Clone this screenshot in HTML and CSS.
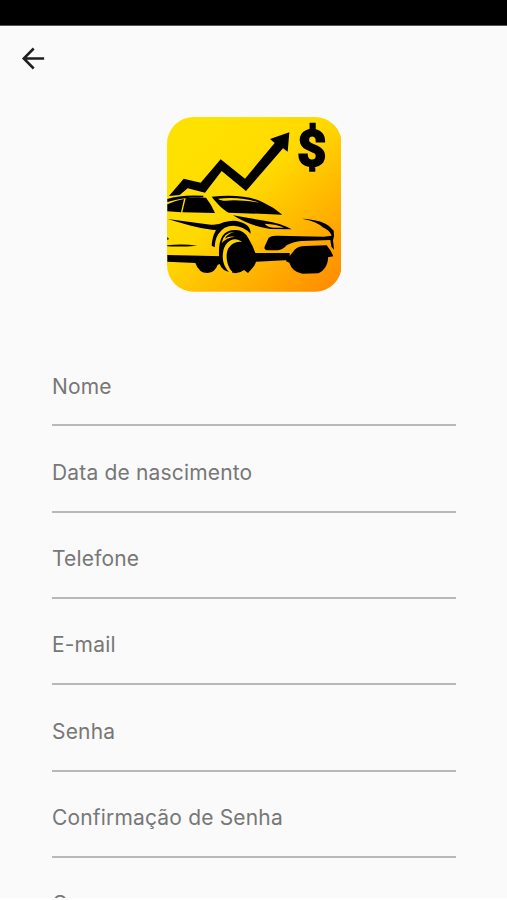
FILE: index.html
```
<!DOCTYPE html>
<html lang="pt-BR">

<head>
    <meta charset="UTF-8">
    <meta name="viewport" content="width=device-width, initial-scale=1.0">
    <title>Cadastro</title>
    <link rel="stylesheet" href="styles.css">
</head>

<body>
    <div class="status-bar"></div>
    <main class="screen">
        <header class="app-bar">
            <button class="back-btn" aria-label="Voltar">
                <svg class="back-icon" viewBox="0 0 24 24">
                    <path d="M22.2 12H2.6M12.2 2.4L2.6 12l9.6 9.6" />
                </svg>
            </button>
        </header>

        <svg class="logo" viewBox="20 22 524 524">
            <defs>
                <linearGradient id="sun" x1="0.18" y1="0.12" x2="0.95" y2="1">
                    <stop offset="0" stop-color="#ffe100" />
                    <stop offset="0.35" stop-color="#ffd900" />
                    <stop offset="0.7" stop-color="#ffb000" />
                    <stop offset="1" stop-color="#ff8a00" />
                </linearGradient>
            </defs>
            <rect x="20" y="22" width="524" height="524" rx="80" fill="url(#sun)" />

            <!-- arrow and dollar sign -->
            <path d="M26 259L70 207L121 219L181 149L254 207L343 100L329 88L387 68L382 126L368 116L257 244L184 184L134 249L82 236L58 256Z" />
            <text class="dollar" x="411" y="168">$</text>

            <!-- roof and windows -->
            <path d="M21 268Q60 254 130 258L128 263Q70 262 21 277Z" />
            <path d="M21 284Q42 273 71 268L62 308L21 305Z" />
            <path d="M76 266Q105 261 137 264Q153 284 164 310L66 308Z" />
            <path d="M154 261C220 255 272 260 306 277Q339 292 366 315L205 309C187 299 169 281 154 261ZM173 267Q180 273 197 273Q235 269 296 279Q245 260 173 267Z" fill-rule="evenodd" />

            <!-- body lines -->
            <path d="M22 328L151 345Q175 347 190 338Q230 325 260 347Q271 357 271 372Q250 350 219 348Q190 348 174 373Q164 388 163 413L154 408Q155 382 167 361Q122 359 22 328Z" />
            <path d="M21 407Q65 402 111 408Q65 412 21 410Z" />
            <path d="M21 382L26 388L21 391Z" />
            <path d="M218 317L313 333Q361 340 394 359L329 358Q266 348 218 317ZM313 342Q321 352 339 354L371 354Q351 344 313 342Z" fill-rule="evenodd" />
            <path d="M425 327Q486 330 509 352L520 363Q523 378 518 392L521 420L513 411L510 391L424 394Q397 396 379 407Q368 420 352 422L318 422Q309 417 314 408L325 384Q333 377 351 378L491 381L514 378Q508 362 487 353Q470 335 425 327Z" />

            <!-- sills and wheels -->
            <path d="M21 436L188 440L190 459L172 465Q164 488 142 490Q116 491 105 460L21 456Z" />
            <path d="M178 463C171 398 180 361 225 361Q251 360 265 387Q279 410 285 430L388 430L388 451L287 456Q282 472 273 479L263 490L251 481Q234 495 211 488Q185 484 178 463Z" />
            <path class="highlight" d="M245 397C220 377 192 397 188 429C184 459 196 480 213 492L216 486C197 466 195 433 204 416Q219 393 245 397Z" />
            <path class="highlight" d="M184 400Q188 369 223 366Q199 373 194 387Q205 378 224 381Q198 384 184 400Z" />
            <path d="M376 454L403 420Q412 410 435 409L499 407L511 423L519 440L503 443C504 464 491 485 474 491L426 492Q395 486 387 459Z" />
        </svg>

        <form class="form">
            <label class="field">Nome</label>
            <label class="field">Data de nascimento</label>
            <label class="field">Telefone</label>
            <label class="field">E-mail</label>
            <label class="field">Senha</label>
            <label class="field">Confirmação de Senha</label>
            <label class="field">Carro</label>
        </form>
    </main>
</body>

</html>
```
FILE: styles.css
```
* {
    margin: 0;
    padding: 0;
    box-sizing: border-box;
}

body {
    height: 100vh;
    display: flex;
    flex-direction: column;
    overflow: hidden;
    background-color: #fefefe;
    font-family: Inter, Roboto, sans-serif;
}

.status-bar {
    flex: none;
    height: 26px;
    background-color: #000;
    border-bottom: 1px solid #555;
}

.screen {
    height: 872px;
    display: flex;
    flex-direction: column;
    overflow: hidden;
    background-color: #fafafa;
}

.app-bar {
    flex: none;
    height: 64px;
    padding: 0 21px;
    display: flex;
    align-items: center;
}

.back-btn {
    width: 25px;
    height: 25px;
    border: none;
    background: none;
    cursor: pointer;
}

.back-icon {
    display: block;
    width: 25px;
    height: 25px;
    fill: none;
    stroke: #1f1f1f;
    stroke-width: 2.4;
}

.logo {
    flex: none;
    width: 174.7px;
    height: 174.7px;
    margin: 27.3px 0 0 166.7px;
}

.dollar {
    font-family: Roboto, sans-serif;
    font-size: 152px;
    font-weight: 700;
    stroke: #000;
    stroke-width: 7px;
}

.highlight {
    fill: #ffd000;
}

.form {
    flex: none;
    padding: 48.2px 51px 0 52px;
}

.field {
    display: block;
    height: 86.3px;
    padding-top: 33.4px;
    border-bottom: 2px solid #b8b8b8;
    color: #777;
    font-size: 21px;
    line-height: 26px;
    letter-spacing: 0.17px;
}
```
